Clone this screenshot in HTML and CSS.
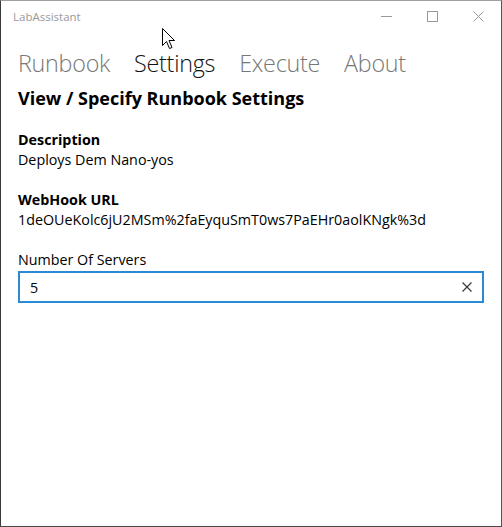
FILE: index.html
```html
<!DOCTYPE html>
<html lang="en">
<head>
<meta charset="utf-8">
<title>LabAssistant</title>
<link rel="stylesheet" href="styles.css">
</head>
<body>
<div class="window">
  <header class="titlebar">
    <span class="app-title">LabAssistant</span>
    <div class="caption-buttons">
      <span class="cap-btn">
        <svg width="11" height="11" viewBox="0 0 11 11"><path d="M0 5.5H11" stroke="#999" stroke-width="1"/></svg>
      </span>
      <span class="cap-btn">
        <svg width="11" height="11" viewBox="0 0 11 11"><rect x="0.5" y="0.5" width="10" height="10" fill="none" stroke="#999" stroke-width="1"/></svg>
      </span>
      <span class="cap-btn">
        <svg width="11" height="11" viewBox="0 0 11 11"><path d="M0.5 0.5L10.5 10.5M10.5 0.5L0.5 10.5" stroke="#999" stroke-width="1"/></svg>
      </span>
    </div>
  </header>

  <nav class="tabs">
    <span class="tab">Runbook</span>
    <span class="tab tab-active">Settings</span>
    <span class="tab">Execute</span>
    <span class="tab">About</span>
  </nav>

  <main class="content">
    <h1 class="page-heading">View / Specify Runbook Settings</h1>

    <section class="field">
      <div class="field-label">Description</div>
      <div class="field-value">Deploys Dem Nano-yos</div>
    </section>

    <section class="field">
      <div class="field-label">WebHook URL</div>
      <div class="field-value">1deOUeKolc6jU2MSm%2faEyquSmT0ws7PaEHr0aolKNgk%3d</div>
    </section>

    <section class="input-field">
      <label class="input-label" for="servers">Number Of Servers</label>
      <div class="textbox">
        <input id="servers" class="textbox-input" type="text" value="5">
        <svg class="clear-icon" width="10" height="10" viewBox="0 0 10 10"><path d="M0.5 0.5L9.5 9.5M9.5 0.5L0.5 9.5" stroke="#333" stroke-width="1.1"/></svg>
      </div>
    </section>
  </main>

  <svg class="cursor" width="14" height="22" viewBox="0 0 14 22">
    <path d="M0.5 0.5V17.5L4.5 13.5L7.5 20.5L10 19.5L7 12.5H12.5Z" fill="#fff" stroke="#000" stroke-width="1"/>
  </svg>
</div>
</body>
</html>
```

FILE: styles.css
```css
* { box-sizing: border-box; }

html, body {
  margin: 0;
  padding: 0;
  background: #ffffff;
}

.window {
  position: relative;
  width: 502px;
  height: 527px;
  background: #ffffff;
  border-left: 1px solid #3a3a3a;
  border-right: 1px solid #555555;
  border-top: 1px solid #a0a0a0;
  border-bottom: 1px solid #4a4a4a;
  font-family: "Open Sans", "Noto Sans", sans-serif;
  color: #000;
  overflow: hidden;
}

.titlebar {
  height: 31px;
  display: flex;
  align-items: center;
  justify-content: space-between;
  padding-left: 12px;
}

.app-title {
  font-size: 11.5px;
  color: #9a9a9a;
  margin-top: -1px;
}

.caption-buttons {
  display: flex;
  height: 100%;
}

.cap-btn {
  width: 46px;
  display: flex;
  align-items: center;
  justify-content: center;
  margin-top: -1px;
}

.tabs {
  display: flex;
  gap: 24px;
  padding-left: 17px;
  margin-top: 11px;
  height: 40px;
  align-items: center;
}

.tab {
  font-size: 23.3px;
  font-weight: 300;
  color: #777777;
  letter-spacing: -0.25px;
}

.tab-active {
  color: #111111;
}

.content {
  padding: 0 17px 0 17px;
}

.page-heading {
  margin: 3px 0 20px 0;
  font-size: 18px;
  font-weight: 700;
  line-height: 24px;
  letter-spacing: 0;
}

.field {
  margin-bottom: 20px;
}

.field-label {
  font-size: 14.3px;
  font-weight: 700;
  line-height: 20px;
}

.field-value {
  font-size: 14.3px;
  line-height: 20px;
}

.input-field {
  display: flex;
  flex-direction: column;
}

.input-label {
  font-size: 14.3px;
  line-height: 20px;
  margin-bottom: 1px;
}

.textbox {
  width: 466px;
  height: 32px;
  border: 2px solid #2b8ad3;
  display: flex;
  align-items: center;
  padding: 0 10px 0 10px;
}

.textbox-input {
  flex: 1;
  border: none;
  outline: none;
  padding: 0;
  font-family: "Open Sans", "Noto Sans", sans-serif;
  font-size: 14.3px;
  color: #000;
  background: transparent;
}

.cursor {
  position: absolute;
  left: 161px;
  top: 27px;
}
```
